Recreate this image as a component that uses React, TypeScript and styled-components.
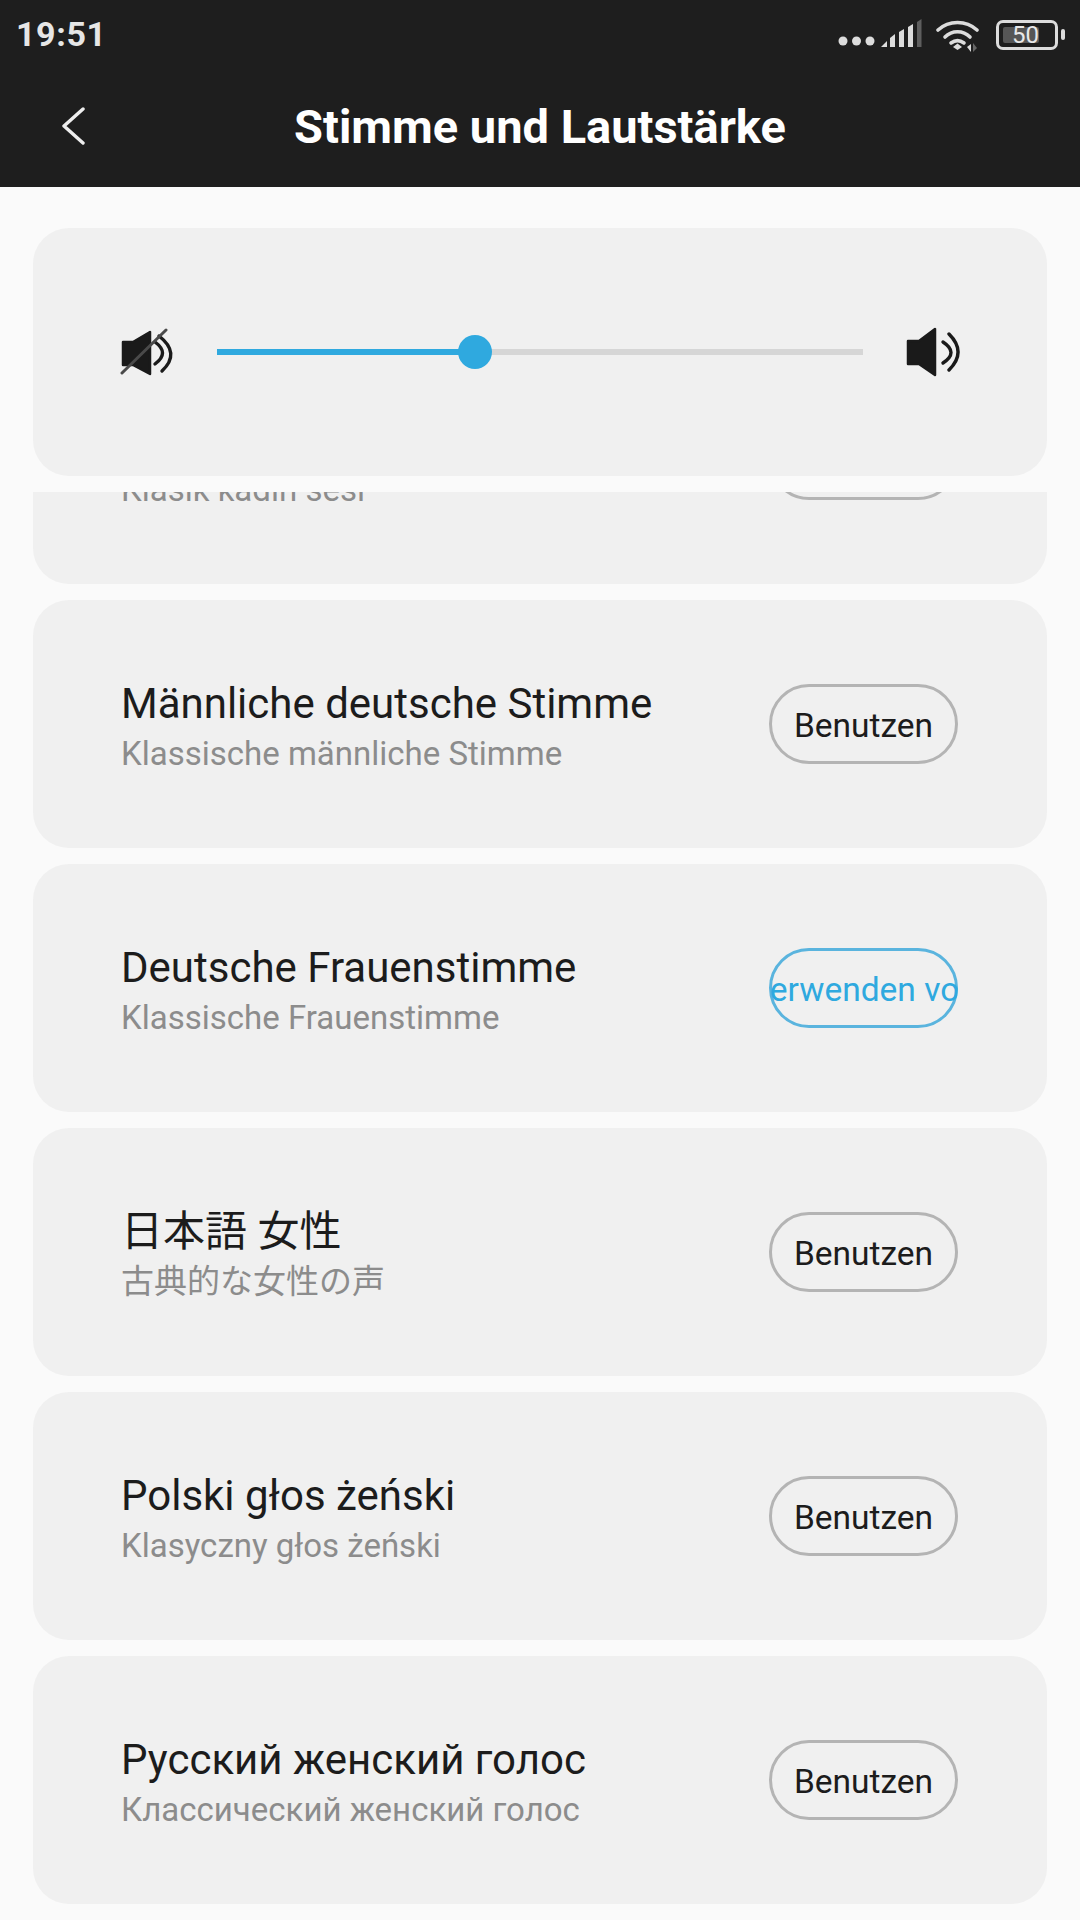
import React from 'react';
import styled, { createGlobalStyle } from 'styled-components';

const GlobalStyle = createGlobalStyle`
  html, body {
    margin: 0;
    padding: 0;
    background: #fafafa;
  }
  * {
    box-sizing: border-box;
  }
`;

const FONT = `Roboto, "Noto Sans CJK JP", sans-serif`;
const BLUE = '#2fa9df';

// Types
interface Voice {
  title: string;
  subtitle: string;
  action: string;
  active?: boolean;
}

// Styled Components
const Page = styled.div`
  width: 1080px;
  height: 1920px;
  overflow: hidden;
  background: #fafafa;
  font-family: ${FONT};
  display: flex;
  flex-direction: column;
`;

const Header = styled.header`
  flex: none;
  height: 187px;
  background: #1e1e1e;
  display: flex;
  flex-direction: column;
`;

const StatusBar = styled.div`
  height: 70px;
  padding: 0 16px 2px 16px;
  display: flex;
  align-items: center;
  justify-content: space-between;
`;

const Clock = styled.span`
  color: #e6e6e6;
  font-size: 34px;
  font-weight: 700;
  letter-spacing: 0.6px;
`;

const StatusIcons = styled.div`
  display: flex;
  align-items: center;
`;

const Battery = styled.div`
  position: relative;
  width: 62px;
  height: 30px;
  margin-left: 14px;
  margin-right: 6px;
  border: 3px solid #dcdcdc;
  border-radius: 7px;
  margin-top: 2px;
  display: flex;
  align-items: center;
  justify-content: center;
  color: #e8e8e8;
  font-size: 24px;
  line-height: 1;
  padding-right: 3px;

  &::after {
    content: '';
    position: absolute;
    right: -10px;
    top: 6px;
    width: 4px;
    height: 11px;
    border-radius: 2px;
    background: #dcdcdc;
  }
`;

const BatteryLevel = styled.div`
  position: absolute;
  left: 4px;
  top: 4px;
  bottom: 4px;
  width: 36px;
  border-radius: 2px;
  background: #565656;
`;

const BatteryText = styled.span`
  position: relative;
`;

const TitleBar = styled.div`
  position: relative;
  flex: 1;
  padding-bottom: 4px;
  display: flex;
  align-items: center;
  justify-content: center;
`;

const BackIcon = styled.svg`
  position: absolute;
  left: 60px;
  top: 37px;
`;

const Title = styled.h1`
  margin: 0;
  color: #ffffff;
  font-size: 47px;
  font-weight: 700;
`;

const Content = styled.main`
  flex: 1;
  min-height: 0;
  padding: 41px 33px 0;
  display: flex;
  flex-direction: column;
`;

const VolumeCard = styled.section`
  flex: none;
  height: 248px;
  margin-bottom: 16px;
  padding: 0 85px 0 87px;
  border-radius: 36px;
  background: #f0f0f0;
  display: flex;
  align-items: center;
  justify-content: space-between;
`;

const Track = styled.div`
  position: relative;
  width: 646px;
  height: 6px;
  background: #d6d6d6;
`;

const TrackFill = styled.div`
  height: 100%;
  background: ${BLUE};
`;

const Thumb = styled.div`
  position: absolute;
  top: 50%;
  width: 34px;
  height: 34px;
  margin: -17px 0 0 -17px;
  border-radius: 50%;
  background: ${BLUE};
`;

const ScrollArea = styled.div`
  flex: 1;
  min-height: 0;
  overflow: hidden;
`;

const VoiceList = styled.div`
  margin-top: -156px;
  display: flex;
  flex-direction: column;
  gap: 16px;
`;

const VoiceCard = styled.article`
  flex: none;
  height: 248px;
  padding: 0 89px 0 88px;
  border-radius: 36px;
  background: #f0f0f0;
  display: flex;
  align-items: center;
  justify-content: space-between;
`;

const VoiceText = styled.div`
  padding-top: 10px;
  display: flex;
  flex-direction: column;
`;

const VoiceTitle = styled.div`
  color: #1c1c1c;
  font-size: 42px;
  line-height: 50px;
`;

const VoiceSubtitle = styled.div`
  color: #8c8c8c;
  font-size: 33px;
  line-height: 50px;
`;

const ActionButton = styled.button<{ $active?: boolean }>`
  flex: none;
  width: 189px;
  height: 80px;
  padding: 2px 0 0;
  border: 3px solid ${(p) => (p.$active ? '#5ab4de' : '#b4b4b4')};
  border-radius: 40px;
  background: transparent;
  color: ${(p) => (p.$active ? BLUE : '#1c1c1c')};
  font-family: ${FONT};
  font-size: 33.5px;
  white-space: nowrap;
  overflow: clip;
  overflow-clip-margin: border-box;
  display: flex;
  align-items: center;
  justify-content: center;
`;

const voices: Voice[] = [
  { title: 'Türk kadın sesi', subtitle: 'Klasik kadın sesi', action: 'Benutzen' },
  { title: 'Männliche deutsche Stimme', subtitle: 'Klassische männliche Stimme', action: 'Benutzen' },
  { title: 'Deutsche Frauenstimme', subtitle: 'Klassische Frauenstimme', action: 'Verwenden von', active: true },
  { title: '日本語 女性', subtitle: '古典的な女性の声', action: 'Benutzen' },
  { title: 'Polski głos żeński', subtitle: 'Klasyczny głos żeński', action: 'Benutzen' },
  { title: 'Русский женский голос', subtitle: 'Классический женский голос', action: 'Benutzen' },
];

// Icons
const DotsIcon = () => (
  <svg width="40" height="12" viewBox="0 0 40 12" style={{ marginTop: 14 }}>
    <circle cx="5" cy="6" r="4.5" fill="#dcdcdc" />
    <circle cx="18.5" cy="6" r="4.5" fill="#dcdcdc" />
    <circle cx="32" cy="6" r="4.5" fill="#dcdcdc" />
  </svg>
);

const SignalIcon = () => (
  <svg width="41" height="30" viewBox="0 0 41 30" style={{ marginLeft: 3 }}>
    <path d="M0 28 L6 22 V28 Z" fill="#dcdcdc" />
    <path d="M9 28 V19 L14 15 V28 Z" fill="#dcdcdc" />
    <path d="M18 28 V13 L23 10 V28 Z" fill="#dcdcdc" />
    <path d="M27 28 V8 L32 5 V28 Z" fill="#dcdcdc" />
    <path d="M36 28 V3 L40.5 0 V28 Z" fill="#5e5e5e" />
  </svg>
);

const WifiIcon = () => (
  <svg width="46" height="34" viewBox="0 0 46 34" style={{ marginLeft: 14, marginTop: 4 }}>
    <g fill="none" stroke="#dcdcdc" strokeWidth="3.6" strokeLinecap="round">
      <path d="M2 11 C13 1 30 1 41 11" />
      <path d="M9 18 C16 11 27 11 34 18" />
      <path d="M15 24 C19 21 24 21 28 24" />
    </g>
    <path d="M17 28 L21.5 24.5 L26 28 L21.5 31 Z" fill="#dcdcdc" />
    <path d="M31 28 L35 33 V25 Z" fill="#dcdcdc" />
    <path d="M37 33 V24 L41 29 Z" fill="#666666" />
  </svg>
);

const SpeakerIcon = () => (
  <svg width="56" height="54" viewBox="0 -1 56 54">
    <path d="M2 15 H13 L29 3 V49 L13 38 H2 Z" fill="#1a1a1a" stroke="#1a1a1a" strokeWidth="2.5" strokeLinejoin="round" />
    <g fill="none" stroke="#1a1a1a" strokeWidth="3.4" strokeLinecap="round">
      <path d="M37 16 Q53 26.5 37 37" />
      <path d="M43 8 Q61 26 43 44" />
    </g>
  </svg>
);

const MutedSpeakerIcon = () => (
  <svg width="54" height="50" viewBox="0 0 54 50">
    <path d="M3 15 H13 L30 5 V47 L13 38 H3 Z" fill="#1a1a1a" stroke="#1a1a1a" strokeWidth="2.5" strokeLinejoin="round" />
    <g fill="none" stroke="#1a1a1a" strokeWidth="3.4" strokeLinecap="round">
      <path d="M35 15 Q50 26 35 37" />
      <path d="M39 9 Q61 26 42 44" />
    </g>
    <path d="M2 46 L46 3" stroke="#4a4a4a" strokeWidth="3" strokeLinecap="round" />
  </svg>
);

const App: React.FC = () => {
  const level = 0.4;

  return (
    <Page>
      <GlobalStyle />
      <Header>
        <StatusBar>
          <Clock>19:51</Clock>
          <StatusIcons>
            <DotsIcon />
            <SignalIcon />
            <WifiIcon />
            <Battery>
              <BatteryLevel />
              <BatteryText>50</BatteryText>
            </Battery>
          </StatusIcons>
        </StatusBar>
        <TitleBar>
          <BackIcon width="26" height="38" viewBox="0 0 26 38" fill="none">
            <path d="M23 2 L4 19 L23 36" stroke="#eeeeee" strokeWidth="3.4" strokeLinecap="round" strokeLinejoin="round" />
          </BackIcon>
          <Title>Stimme und Lautstärke</Title>
        </TitleBar>
      </Header>
      <Content>
        <VolumeCard>
          <MutedSpeakerIcon />
          <Track>
            <TrackFill style={{ width: `${level * 100}%` }} />
            <Thumb style={{ left: `${level * 100}%` }} />
          </Track>
          <SpeakerIcon />
        </VolumeCard>
        <ScrollArea>
          <VoiceList>
            {voices.map((voice) => (
              <VoiceCard key={voice.title}>
                <VoiceText>
                  <VoiceTitle>{voice.title}</VoiceTitle>
                  <VoiceSubtitle>{voice.subtitle}</VoiceSubtitle>
                </VoiceText>
                <ActionButton $active={voice.active}>{voice.action}</ActionButton>
              </VoiceCard>
            ))}
          </VoiceList>
        </ScrollArea>
      </Content>
    </Page>
  );
};

export default App;
